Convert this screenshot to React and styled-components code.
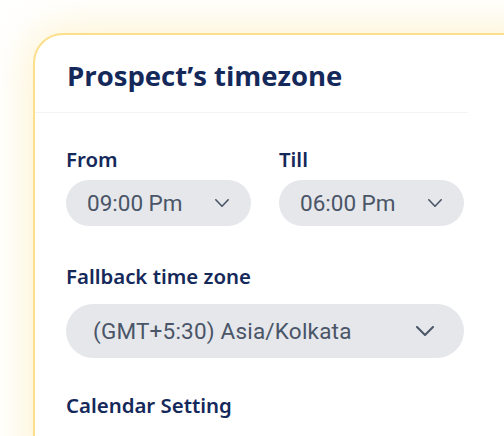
import React from "react";
import styled, { createGlobalStyle } from "styled-components";

const GlobalStyle = createGlobalStyle`
  html, body {
    margin: 0;
    padding: 0;
    background: #ffffff;
    overflow: hidden;
  }
  * {
    box-sizing: border-box;
  }
`;

const Page = styled.div`
  width: 504px;
  height: 436px;
  padding: 33px 0 0 33px;
  overflow: hidden;
`;

const Card = styled.section`
  width: 540px;
  height: 460px;
  background: #ffffff;
  border: 2px solid #fcdf8a;
  border-radius: 30px;
  box-shadow: 0 0 40px 8px rgba(253, 226, 150, 0.42);
`;

const Header = styled.div`
  width: 433px;
  height: 78px;
  padding: 23px 0 0 32px;
  border-bottom: 1px solid #f3f4f6;
`;

const Title = styled.h2`
  margin: 0;
  font-family: "Open Sans", sans-serif;
  font-weight: 700;
  font-size: 27.5px;
  line-height: 36px;
  color: #14295a;
`;

const Body = styled.div`
  width: 398px;
  margin-left: 31px;
  padding-top: 33px;
  display: flex;
  flex-direction: column;
`;

const Row = styled.div`
  display: grid;
  grid-template-columns: 185px 185px;
  column-gap: 28px;
`;

const Field = styled.div`
  display: flex;
  flex-direction: column;
  margin-bottom: ${(p) => p.$gap || 0}px;
`;

const Label = styled.label`
  font-family: "Noto Sans", sans-serif;
  font-weight: 600;
  font-size: 20.4px;
  line-height: 26px;
  color: #14295a;
  margin-bottom: ${(p) => p.$gap || 10}px;
`;

const Select = styled.div`
  height: ${(p) => p.$h}px;
  border-radius: ${(p) => p.$h / 2}px;
  background: #e5e7eb;
  display: flex;
  align-items: center;
  justify-content: space-between;
  padding: 0 ${(p) => p.$pr}px 0 ${(p) => p.$pl}px;
  font-family: Roboto, sans-serif;
  font-size: 22.5px;
  letter-spacing: ${(p) => p.$ls || 0}px;
  color: #4a5567;
`;

const Chevron = ({ w, h, sw }) => (
  <svg width={w} height={h} viewBox={`0 0 ${w} ${h}`} fill="none" stroke="#4a5567" strokeWidth={sw} strokeLinecap="round" strokeLinejoin="round">
    <path d={`M${sw / 2} ${sw / 2} L${w / 2} ${h - sw / 2} L${w - sw / 2} ${sw / 2}`} />
  </svg>
);

export default function App() {
  return (
    <>
      <GlobalStyle />
      <Page>
        <Card>
          <Header>
            <Title>Prospect’s timezone</Title>
          </Header>
          <Body>
            <Field $gap={37}>
              <Row>
                <Field>
                  <Label $gap={8}>From</Label>
                  <Select $h={46} $pl={21} $pr={22}>
                    09:00 Pm
                    <Chevron w={14} h={8} sw={1.6} />
                  </Select>
                </Field>
                <Field>
                  <Label $gap={8}>Till</Label>
                  <Select $h={46} $pl={21} $pr={22}>
                    06:00 Pm
                    <Chevron w={14} h={8} sw={1.6} />
                  </Select>
                </Field>
              </Row>
            </Field>
            <Field $gap={34}>
              <Label $gap={15}>Fallback time zone</Label>
              <Select $h={54} $pl={27} $pr={30} $ls={0.2}>
                (GMT+5:30) Asia/Kolkata
                <Chevron w={18} h={10} sw={2} />
              </Select>
            </Field>
            <Label>Calendar Setting</Label>
          </Body>
        </Card>
      </Page>
    </>
  );
}
